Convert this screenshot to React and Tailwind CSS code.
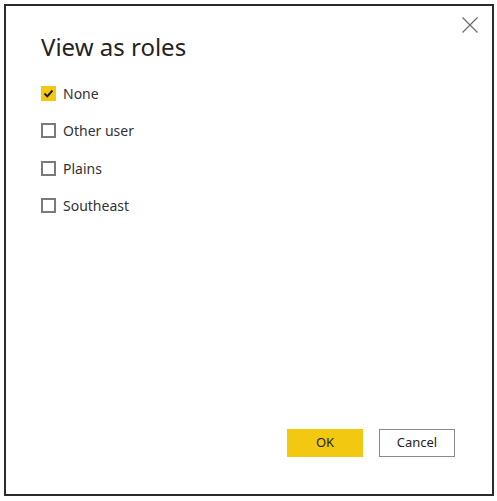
import React from "react";

const font = { fontFamily: '"Noto Sans", "Open Sans", sans-serif' };

function Check({ checked, label }) {
  return (
    <div className="flex items-center h-[20px] gap-[7px]">
      {checked ? (
        <div className="w-[15px] h-[15px] bg-[#f2c811] flex items-center justify-center">
          <svg width="11" height="11" viewBox="0 0 11 11">
            <path d="M1.5 5.5 L4.3 8.3 L9.5 2.5" fill="none" stroke="#1a1a1a" strokeWidth="1.9" />
          </svg>
        </div>
      ) : (
        <div className="w-[15px] h-[15px] border-2 border-[#7a7a7a] bg-white" />
      )}
      <span className="text-[14px] text-[#333]">{label}</span>
    </div>
  );
}

export default function App() {
  return (
    <div className="w-[497px] h-[501px] bg-white pt-[4px] pl-[4px] pr-[3px] pb-[5px]" style={font}>
      <div className="h-full border-2 border-[#2b2b2b] bg-white relative flex flex-col">
        <button className="absolute right-[10px] top-[7px] w-[24px] h-[24px] flex items-center justify-center">
          <svg width="18" height="18" viewBox="0 0 18 18">
            <path d="M1.5 1.5 L16.5 16.5 M16.5 1.5 L1.5 16.5" stroke="#6b6b6b" strokeWidth="1.2" />
          </svg>
        </button>
        <h1 className="pl-[35px] pt-[26px] text-[24px] leading-[30px] text-[#252423]">View as roles</h1>
        <div className="pl-[35px] pt-[21px] flex flex-col gap-[17.5px]">
          <Check checked label="None" />
          <Check label="Other user" />
          <Check label="Plains" />
          <Check label="Southeast" />
        </div>
        <div className="mt-auto flex justify-end gap-[16px] pr-[37px] pb-[37px]">
          <button className="w-[76px] h-[28px] bg-[#f2c811] text-[13px] text-[#252423]">OK</button>
          <button className="w-[76px] h-[28px] border border-[#8a8a8a] bg-white text-[13px] text-[#252423]">Cancel</button>
        </div>
      </div>
    </div>
  );
}
